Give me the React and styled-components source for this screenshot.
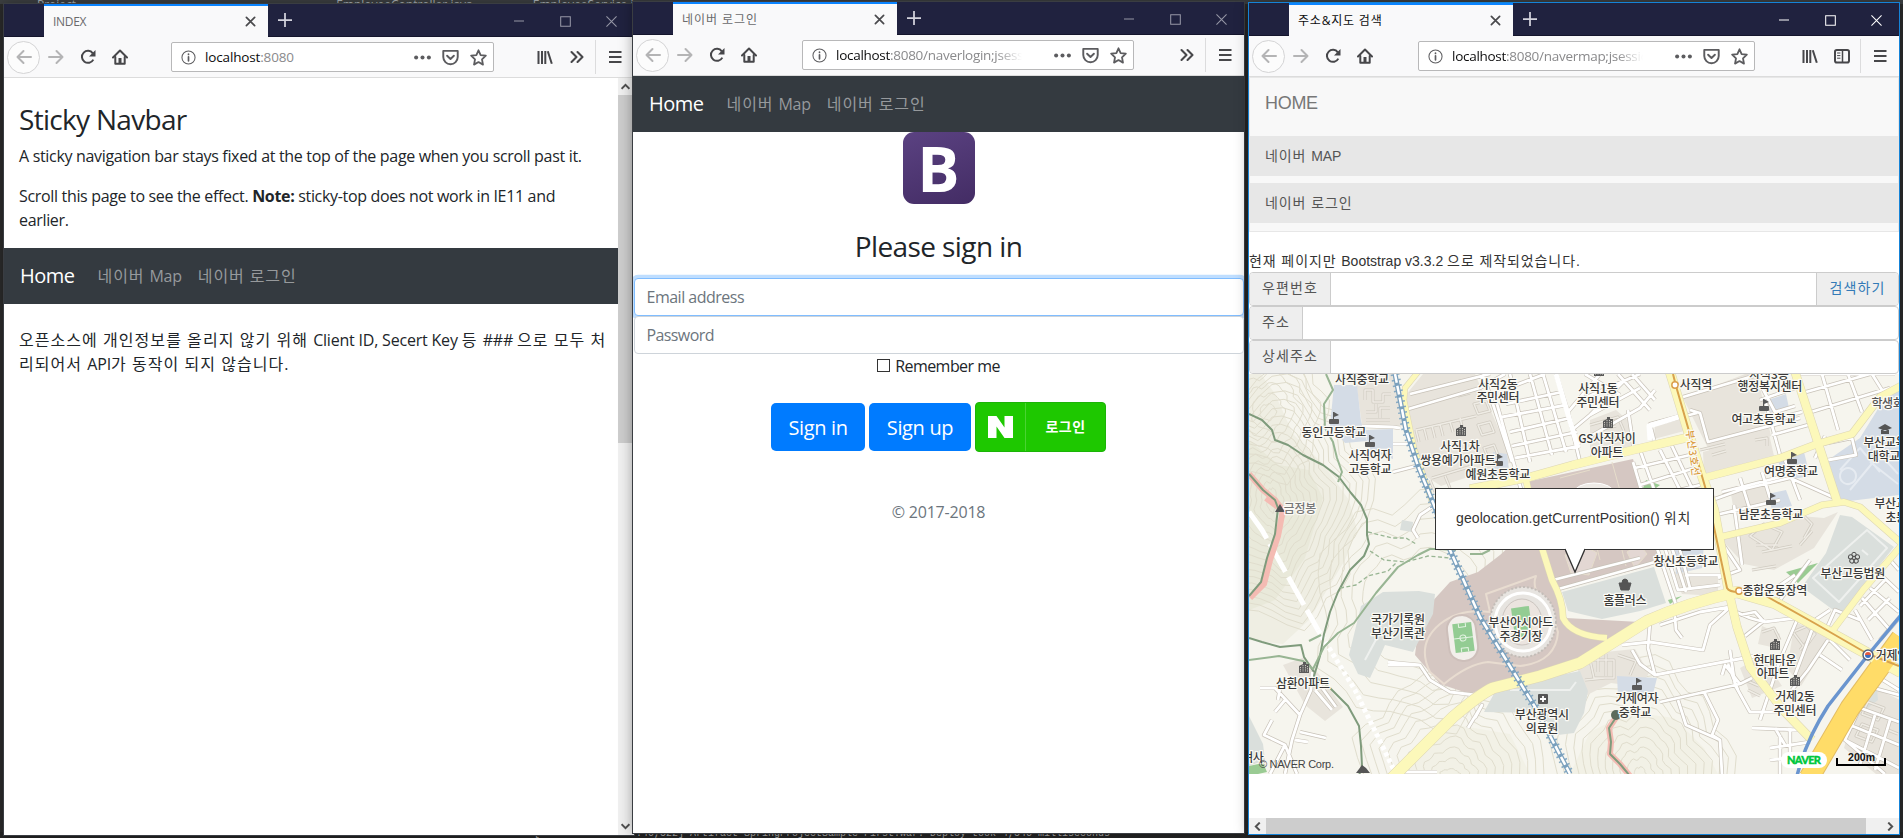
import React from 'react';
import styled, { createGlobalStyle, css } from 'styled-components';

const GlobalStyle = createGlobalStyle`
  *, *::before, *::after { box-sizing: border-box; }
  html, body { margin: 0; padding: 0; overflow: hidden; background: #2b2b2b; }
  p, h3, ul { margin: 0; padding: 0; }
`;

const ui = '"Open Sans", "Noto Sans CJK KR", sans-serif';
const helv = '"Liberation Sans", "Noto Sans CJK KR", sans-serif';
const kr = '"Noto Sans CJK KR", sans-serif';

/* Hangul runs are set wider than the Latin text around them */
const Ko = styled.span`
  letter-spacing: ${p => p.$ls || 1.05}px;
`;

/* ---------- desktop ---------- */
const Desktop = styled.div`
  position: relative;
  width: 1903px;
  height: 838px;
  overflow: hidden;
  background: #2b2b2b;
  display: flex;
  flex-direction: column;
  justify-content: space-between;
`;
const EditorStrip = styled.div`
  display: flex;
  gap: 260px;
  height: 4px;
  padding-left: 37px;
  overflow: hidden;
  white-space: nowrap;
  background: #3c3f41;
  color: #a9b0b5;
  font: 12px/12px ${ui};
  span { margin-top: -1px; }
  span + span { margin-right: -200px; }
`;
const ConsoleStrip = styled.div`
  height: 6px;
  padding-left: 534px;
  overflow: hidden;
  white-space: nowrap;
  background: #242424;
  color: #a8a8a8;
  font: 10px/12px "Liberation Mono", monospace;
  span { display: block; margin-top: -4px; }
`;

const Window = styled.section`
  position: absolute;
  left: ${p => p.$x}px;
  top: ${p => p.$y}px;
  width: ${p => p.$w}px;
  height: ${p => p.$h}px;
  display: flex;
  flex-direction: column;
  background: #fff;
  box-shadow: 0 0 0 1px ${p => (p.$active ? '#1583d7' : '#3a3d42')}, 0 0 13px rgba(0, 0, 0, 0.38);
`;
const TitleBar = styled.header`
  display: flex;
  flex: none;
  height: 33px;
  padding-left: 40px;
  background: #20223f;
  border-bottom: 1px solid #14152c;
`;
const Tab = styled.div`
  display: flex;
  align-items: center;
  justify-content: space-between;
  width: 224px;
  height: 33px;
  padding: 0 12px 0 9px;
  border-top: 2px solid #0a84ff;
  background: #f9f9fa;
  color: ${p => (p.$active ? '#0c0c0d' : '#6a6a6c')};
  font: 12px/20px ${ui};
  letter-spacing: ${p => p.$ls || 0}px;
`;
const NewTab = styled.div`
  display: flex;
  align-items: center;
  padding-left: 10px;
  flex: 1;
`;
const Control = styled.div`
  display: flex;
  align-items: center;
  justify-content: center;
  width: 46px;
  padding-top: 2px;
  color: ${p => (p.$active ? '#ffffff' : '#9697a6')};
`;
const Toolbar = styled.div`
  display: flex;
  flex: none;
  align-items: center;
  height: 41px;
  padding-left: 3px;
  background: #f9f9fa;
  border-bottom: 1px solid #dcdcdc;
  color: #4a4a4d;
`;
const Tool = styled.div`
  display: flex;
  align-items: center;
  justify-content: center;
  flex: none;
  width: 32px;
  height: 32px;
  color: ${p => (p.$dim ? '#b4b4b5' : '#47474a')};
  ${p => p.$round && css`
    width: 33px;
    height: 33px;
    border: 1px solid #d4d4d5;
    border-radius: 50%;
    background: #fcfcfc;
  `}
`;
const Address = styled.div`
  display: flex;
  align-items: center;
  flex: none;
  width: ${p => p.$w}px;
  height: 30px;
  margin-left: ${p => p.$gap}px;
  padding: 0 6px 0 9px;
  border: 1px solid #b8b8b9;
  border-radius: 2px;
  background: #fff;
  color: #5c5c5f;
`;
const Url = styled.div`
  flex: 1;
  height: 22px;
  margin: 2px 0 0 9px;
  overflow: hidden;
  white-space: nowrap;
  color: #8a8a8c;
  font: 13.5px/20px ${ui};
  letter-spacing: ${p => p.$ls}px;
  b { font-weight: 400; color: #0c0c0d; }
  ${p => p.$fade && css`
    mask-image: linear-gradient(to right, #000 calc(100% - 58px), transparent calc(100% - 32px));
  `}
`;
const UrlTools = styled.div`
  display: flex;
  align-items: center;
  gap: 11px;
`;
const RightTools = styled.div`
  display: flex;
  align-items: center;
  margin-left: auto;
  padding-right: ${p => p.$pr}px;
`;
const Divider = styled.div`
  width: 1px;
  height: 34px;
  margin: 0 3px 0 2px;
  background: #dcdcdd;
`;

const Svg = ({ s = 16, children, ...r }) => (
  <svg width={s} height={s} viewBox="0 0 16 16" fill="none" stroke="currentColor" strokeWidth="2" strokeLinecap="round" strokeLinejoin="round" {...r}>{children}</svg>
);
const BackIcon = () => <Svg><path d="M15 8H1.5M7.5 2L1.5 8l6 6" /></Svg>;
const ForwardIcon = () => <Svg><path d="M1 8h13.500M8.500 2l6 6-6 6" /></Svg>;
const ReloadIcon = () => (
  <Svg><path d="M13.3 10.600A6 6 0 1 1 12.800 4.300" strokeLinecap="butt" /><path d="M15.500 1v6.500H9z" fill="currentColor" stroke="none" /></Svg>
);
const HomeIcon = () => (
  <Svg><path d="M1 8.500L8 1.500l7 7" /><path d="M3.300 8v6.700h9.400V8" /><path d="M8 9v5" strokeWidth="3" strokeLinecap="butt" /></Svg>
);
const InfoIcon = () => (
  <Svg s={15} strokeWidth="1.100"><circle cx="8" cy="8" r="7" /><path d="M8 7.300v4.200M8 4.300v.4" strokeWidth="1.800" /></Svg>
);
const DotsIcon = () => (
  <Svg s={17} fill="currentColor" stroke="none"><circle cx="2" cy="8" r="1.900" /><circle cx="8" cy="8" r="1.900" /><circle cx="14" cy="8" r="1.900" /></Svg>
);
const PocketIcon = () => (
  <Svg s={17} strokeWidth="1.800"><path d="M1.200 1.800h13.600v5.700a6.800 6.800 0 0 1-13.600 0z" /><path d="M4.800 6.300L8 9.400l3.200-3.100" /></Svg>
);
const StarIcon = () => (
  <Svg s={17} strokeWidth="1.700"><path d="M8 1.200l2 4.500 4.900.6-3.600 3.400.9 5L8 12.300l-4.200 2.400.9-5L1.100 6.300 6 5.700z" /></Svg>
);
const LibraryIcon = () => (
  <Svg strokeLinecap="butt"><path d="M1.500 2v13M5 2v13M8.300 2v13M10.800 2.200l4 12.600" /></Svg>
);
const SidebarIcon = () => (
  <Svg><rect x="1" y="2" width="14" height="12.500" rx="1.800" /><path d="M8.500 2v12" strokeWidth="1.500" /><path d="M3.500 5h2.500M3.500 7.600h2.500M3.500 10.200h2.500" strokeWidth="1" /></Svg>
);
const MoreIcon = () => <Svg strokeWidth="2.100"><path d="M2.500 3l5 5-5 5M8.500 3l5 5-5 5" /></Svg>;
const MenuIcon = () => <Svg strokeLinecap="butt"><path d="M2 3h12.500M2 8h12.500M2 13h12.500" /></Svg>;
const CloseIcon = () => <Svg s={11} strokeWidth="2.500" color="#4a4a4d"><path d="M2 2l12 12M14 2L2 14" /></Svg>;
const PlusIcon = () => <Svg s={14} color="#d3d3dd" strokeLinecap="butt"><path d="M8 0v16M0 8h16" /></Svg>;

const Controls = ({ active }) => (
  <>
    <Control $active={active}><Svg s={10} strokeWidth="1.600" strokeLinecap="butt"><path d="M0 8h16" /></Svg></Control>
    <Control $active={active}><Svg s={11} strokeWidth="1.500"><path d="M1 1h14v14H1z" strokeLinejoin="miter" /></Svg></Control>
    <Control $active={active}><Svg s={11} strokeWidth="1.500"><path d="M1 1l14 14M15 1L1 15" /></Svg></Control>
  </>
);

const Browser = ({ x, y, w, h, active, title, tabLs, path, urlLs, gap, urlW, pr, extra, children }) => (
  <Window $x={x} $y={y} $w={w} $h={h} $active={active}>
    <TitleBar>
      <Tab $active={active} $ls={tabLs}>{title}<CloseIcon /></Tab>
      <NewTab><PlusIcon /></NewTab>
      <Controls active={active} />
    </TitleBar>
    <Toolbar>
      <Tool $round $dim><BackIcon /></Tool>
      <Tool $dim><ForwardIcon /></Tool>
      <Tool><ReloadIcon /></Tool>
      <Tool><HomeIcon /></Tool>
      <Address $w={urlW} $gap={gap}>
        <InfoIcon />
        <Url $ls={urlLs} $fade={path.length > 6}><b>localhost</b>{path}</Url>
        <UrlTools><DotsIcon /><PocketIcon /><StarIcon /></UrlTools>
      </Address>
      <RightTools $pr={pr}>
        {extra}
        <Divider />
        <Tool><MenuIcon /></Tool>
      </RightTools>
    </Toolbar>
    {children}
  </Window>
);

/* ---------- Bootstrap 4 pages ---------- */
const PageRow = styled.div`
  display: flex;
  flex: 1;
  min-height: 0;
`;
const Page = styled.main`
  flex: 1;
  min-width: 0;
  overflow: hidden;
  color: #212529;
  font: 16px/24px ${ui};
`;
const Container = styled.div`
  padding: 24px 15px 0;
`;
const Heading = styled.h3`
  margin-bottom: ${p => p.$mb || 8}px;
  font-size: 28px;
  font-weight: 400;
  line-height: 34px;
  letter-spacing: ${p => p.$ls}px;
`;
const Para = styled.p`
  margin-bottom: 16px;
  white-space: nowrap;
`;
const Line = styled.span`
  display: block;
  letter-spacing: ${p => p.$ls}px;
  b { font-weight: 700; }
`;
const Navbar = styled.nav`
  display: flex;
  align-items: center;
  height: 56px;
  padding: 0 16px;
  background: #343a40;
`;
const Brand = styled.a`
  margin-right: 23px;
  color: #fff;
  font-size: 20px;
  letter-spacing: -0.500px;
  line-height: 30px;
`;
const NavLink = styled.a`
  margin-right: 16px;
  color: #96999c;
  letter-spacing: -0.250px;
`;
const DarkNav = () => (
  <Navbar>
    <Brand>Home</Brand>
    <NavLink><Ko $ls={0.9}>네이버 </Ko>Map</NavLink>
    <NavLink><Ko $ls={0.9}>네이버 로그인</Ko></NavLink>
  </Navbar>
);

const VScroll = styled.div`
  display: flex;
  flex-direction: column;
  align-items: center;
  flex: none;
  width: 16px;
  padding-right: 1px;
  background: #f0f0f0;
  color: #505050;
`;
const VThumb = styled.div`
  width: 15px;
  height: 348px;
  margin-bottom: auto;
  background: #cdcdcd;
`;
const Arrow = styled.div`
  display: flex;
  align-items: center;
  justify-content: center;
  width: 17px;
  height: 17px;
  color: #505050;
`;
const Chevron = ({ d }) => <Svg s={9} strokeWidth="3.500" strokeLinecap="butt" strokeLinejoin="miter"><path d={d} /></Svg>;

const SignIn = styled.div`
  display: flex;
  flex-direction: column;
  align-items: center;
  text-align: center;
`;
const LogoWrap = styled.div`
  display: flex;
  align-items: center;
  justify-content: center;
  width: 72px;
  height: 72px;
  margin-bottom: 25px;
  border-radius: 11px;
  background: linear-gradient(160deg, #5b4282, #432c64);
  color: #fff;
  font: 700 63px/72px "Open Sans", sans-serif;
`;
const Field = styled.div`
  position: relative;
  z-index: ${p => (p.$focus ? 0 : 1)};
  width: 610px;
  height: 38px;
  padding: 6px 12px;
  border: 1px solid ${p => (p.$focus ? '#80bdff' : '#ced4da')};
  border-radius: 4px;
  background: #fff;
  box-shadow: ${p => (p.$focus ? '0 0 0 3.200px #bfdeff' : 'none')};
  color: #6c757d;
  text-align: left;
  letter-spacing: ${p => p.$ls}px;
`;
const Remember = styled.label`
  display: flex;
  align-items: center;
  gap: 5px;
  height: 24px;
  margin-bottom: 24px;
  letter-spacing: -0.550px;
`;
const Box = styled.i`
  width: 13px;
  height: 13px;
  margin-top: -2px;
  border: 1px solid #333;
  background: #fff;
`;
const Buttons = styled.div`
  display: flex;
  align-items: center;
  gap: 4px;
  height: 50px;
`;
const Button = styled.div`
  width: ${p => p.$w}px;
  height: 48px;
  border-radius: 5px;
  background: #007bff;
  color: #fff;
  font-size: 20px;
  line-height: 50px;
  letter-spacing: -0.350px;
`;
const NaverButton = styled.div`
  display: flex;
  width: 131px;
  height: 50px;
  border: 1px solid #1bb407;
  border-radius: 4px;
  background: #1ec800;
  color: #fff;
`;
const NaverMark = styled.div`
  width: 50px;
  border-right: 1px solid #4ad333;
  display: flex;
  align-items: center;
  justify-content: center;
`;
const NaverLabel = styled.div`
  flex: 1;
  font: 700 14px/47px ${kr};
  letter-spacing: 0.400px;
`;
const Copyright = styled.p`
  margin-top: 48px;
  color: #6c757d;
  letter-spacing: -0.200px;
`;

/* ---------- Bootstrap 3 page ---------- */
const MapPage = styled.main`
  display: flex;
  flex-direction: column;
  flex: 1;
  color: #333;
  font: 14px/20px ${helv};
`;
const LightNav = styled.nav`
  height: 155px;
  margin-bottom: 20px;
  border: 1px solid #e7e7e7;
  background: #f8f8f8;
`;
const LightBrand = styled.div`
  height: 50px;
  margin-bottom: 8px;
  padding: 15px;
  color: #777;
  font-size: 18px;
  letter-spacing: -0.300px;
`;
const LightItem = styled.div`
  height: 40px;
  margin-bottom: 7px;
  padding: 10px 15px;
  background: #e7e7e7;
  color: #555;
  letter-spacing: -0.100px;
`;
const Notice = styled.p`
  height: 20px;
  margin-top: -1px;
  margin-bottom: 1px;
  white-space: nowrap;
`;
const InputGroup = styled.div`
  display: flex;
  height: 34px;
  border: 1px solid #ccc;
  border-radius: 4px;
  overflow: hidden;
  background: #fff;
`;
const Addon = styled.div`
  width: ${p => p.$w}px;
  margin-left: ${p => (p.$right ? 'auto' : 0)};
  border: solid #ccc;
  border-width: ${p => (p.$right ? '0 0 0 1px' : '0 1px 0 0')};
  background: #eee;
  color: ${p => (p.$right ? '#337ab7' : '#555')};
  line-height: 30px;
  text-align: center;
  letter-spacing: 1.100px;
`;
const MapBox = styled.div`
  position: relative;
  height: 400px;
  margin-bottom: auto;
`;
const Callout = styled.div`
  position: absolute;
  left: 186px;
  top: 114px;
  width: 279px;
  height: 62px;
  padding: 19px 0 0 20px;
  border: 1px solid #333;
  background: #fff;
  white-space: nowrap;
  letter-spacing: 0.090px;
  svg { position: absolute; left: 129px; top: 59px; }
`;
const HScroll = styled.div`
  display: flex;
  align-items: center;
  height: 16px;
  background: #f0f0f0;
`;
const HThumb = styled.div`
  width: 600px;
  height: 16px;
  margin-right: auto;
  background: #cdcdcd;
`;

/* ---------- map drawing ---------- */
const MapLabel = styled.text`
  font: 500 ${p => p.$size || 12}px ${kr};
  fill: ${p => p.$fill || '#3a3a3a'};
  stroke: #fbfaf5;
  stroke-width: 2.500px;
  stroke-linejoin: round;
  paint-order: stroke;
`;

const ring = (cx, cy, rx, ry, seed) => {
  const pts = [];
  for (let i = 0; i < 40; i++) {
    const a = (i / 40) * Math.PI * 2;
    const k = 1 + 0.07 * Math.sin(a * 5 + seed) + 0.05 * Math.sin(a * 9 + 2) + 0.03 * Math.cos(a * 13 + seed * 1.5);
    pts.push(`${(cx + rx * k * Math.cos(a)).toFixed(1)},${(cy + ry * k * Math.sin(a)).toFixed(1)}`);
  }
  return `M${pts.join('L')}Z`;
};
const rings = (cx, cy, rx, ry, n, step, seed) =>
  Array.from({ length: n }, (_, i) => ring(cx, cy, rx + i * step, ry + i * step * 1.25, seed + i * 0.12)).join('');

const hillContours = rings(1272, 500, 5, 12, 16, 6, 0.5);
const southContours = rings(1450, 775, 10, 6, 11, 8, 2) + rings(1640, 775, 6, 8, 12, 7.5, 1);
const westContours = rings(1268, 412, 8, 8, 7, 8, 1.2) + rings(1420, 610, 60, 60, 5, 11, 1.2);

const labels = [
  ['사직중학교', 1362, 379], ['사직2동', 1498, 384], ['주민센터', 1498, 397], ['동인고등학교', 1334, 432],
  ['사직여자', 1370, 455], ['고등학교', 1370, 469], ['사직1차', 1460, 446], ['쌍용예가아파트', 1458, 460],
  ['예원초등학교', 1498, 474], ['금정봉', 1300, 508, '#777'], ['사직1동', 1598, 388], ['주민센터', 1598, 402],
  ['GS사직자이', 1607, 438], ['아파트', 1607, 452], ['사직역', 1696, 384], ['사직3동', 1769, 374],
  ['행정복지센터', 1770, 386], ['여고초등학교', 1764, 419], ['여명중학교', 1791, 471], ['학생회관', 1893, 403, '#555'],
  ['부산교육', 1885, 442], ['대학교', 1884, 456], ['부산교대', 1896, 503], ['초등학교', 1907, 517],
  ['남문초등학교', 1771, 514], ['창신초등학교', 1686, 561], ['부산고등법원', 1853, 573], ['종합운동장역', 1775, 590],
  ['홈플러스', 1625, 600], ['국가기록원', 1398, 619], ['부산기록관', 1398, 633], ['부산아시아드', 1521, 622],
  ['주경기장', 1521, 636], ['삼환아파트', 1303, 683], ['부산광역시', 1542, 714], ['의료원', 1542, 728],
  ['현대타운', 1775, 660], ['아파트', 1773, 673], ['거제2동', 1795, 696], ['주민센터', 1795, 710],
  ['거제여자', 1637, 698], ['중학교', 1635, 712], ['거제역', 1892, 655], ['여사', 1253, 757],
];
const labelWidth = t => [...t].reduce((n, c) => n + (/[A-Z0-9]/.test(c) ? 7.2 : 10.8), 0);

const minorRoads = `
M1393 427L1362 426M1400 428L1393 427M1405 410L1480 388L1505 374M1410 394L1490 374M1393 444H1410M1393 472L1420 465
M1497 404L1524 500M1483 374L1512 462M1510 374L1530 462M1530 374L1552 455M1543 374L1566 452M1503 390L1545 374M1506 404L1562 392M1502 417L1566 405M1510 432L1570 418M1512 446L1577 432M1515 458L1580 446
M1556 374L1568 412L1580 462M1568 412L1600 374M1572 430L1590 415L1625 380M1590 415L1640 388M1618 374L1650 410M1632 374L1655 400M1640 374L1580 400M1628 410L1634 450M1585 374L1620 395M1575 445L1640 408L1655 390
M1650 425L1697 413M1654 440L1650 424L1680 416M1683 397L1760 374M1690 410L1700 413L1708 442M1700 413L1708 442L1800 418M1765 400L1780 455M1755 374L1775 412L1795 406M1760 400L1795 388M1772 435L1808 425M1770 420L1802 412
M1800 374L1895 374M1806 392L1870 374M1811 412L1890 388M1822 374L1838 430M1848 374L1862 412M1872 374L1882 390M1825 436L1815 458M1818 445L1852 438L1856 455L1828 460
M1633 462L1650 520M1640 450L1665 520M1660 450L1690 510M1672 446L1700 505M1635 468L1690 455M1640 485L1695 468M1646 498L1700 485
M1707 484L1720 530M1712 500L1740 490L1790 478M1716 515L1780 500M1740 478L1750 510M1762 472L1770 498M1785 460L1800 500M1790 478L1835 498M1722 492L1800 472
M1657 548L1676 605M1665 548L1678 590L1720 585M1672 548L1686 592M1680 550L1690 588M1555 590L1655 562M1553 580L1640 558M1685 575L1722 575M1720 540L1740 570L1718 578M1734 505L1742 565
M1780 600L1810 560M1795 575L1770 592M1815 620L1830 610M1828 640L1808 670L1792 690M1797 620L1780 660L1760 720M1812 630L1795 675M1830 640L1850 660M1820 655L1842 670M1825 632L1835 610L1860 620
M1862 598L1890 630M1870 588L1899 612M1855 610L1872 640M1880 574L1899 592M1890 560L1899 570M1868 620L1890 598M1860 606L1885 580M1880 640L1899 618
M1674 605L1676 630L1682 638M1730 607L1710 625L1703 650L1650 642L1622 645M1650 622L1648 648L1655 675L1760 655M1730 607L1700 612L1660 625M1736 612L1750 618L1764 622L1796 618M1745 636L1765 620M1764 622L1755 612L1740 615
M1655 675L1640 664L1632 650M1660 702L1740 684L1752 678M1740 684L1725 665L1722 675M1730 650L1735 685L1750 712H1780M1678 700L1686 725L1720 740L1722 774M1704 692L1718 720L1712 735L1720 740M1728 664L1738 690M1752 728L1800 730M1775 728L1785 745M1770 748L1810 742M1770 760L1805 756M1780 735V774M1790 728V760
M1862 685L1899 695M1852 705L1899 722M1868 690L1845 740L1899 768M1845 740L1885 774M1875 715L1860 765M1890 720L1875 770M1850 725L1899 745M1870 672L1899 690
M1388 665H1420L1430 680L1450 692L1475 695M1420 665L1388 662M1475 718L1482 705L1468 728M1405 772H1437M1418 538L1413 530L1420 515L1435 505
M1312 672L1311 690L1300 715L1292 740L1285 774M1260 688H1275L1300 715M1278 700L1280 688M1272 720L1264 735L1285 745L1297 774M1300 732L1326 738M1295 740L1308 742M1315 690L1332 710M1320 685L1336 707M1285 745L1270 774M1285 700L1275 712`;

const blockDetail = `
M1365 400v-10h8v12h10v-8h8M1366 412h10v-8M1380 418v-10h10M1366 420h24
M1416 430l3 12M1424 428l3 12M1432 426l3 12M1440 424l3 12M1450 422l3 10M1460 418l3 12M1416 430l60-14M1430 480l5 12M1445 476l5 12M1432 478l40-12
M1474 404l12-3 4 10-12 3zM1478 425l12-3 4 10-12 3zM1484 448l10-3 4 10-10 3zM1458 396l12-3
M1590 425l28-8 6 14M1600 430l16-4M1700 450l25-6M1755 440l12-2v8M1712 455l14-4
M1750 536l14-12 18 8-10 18zM1788 520l14-6 10 10-8 14M1756 545h22M1762 552l30-6M1800 545l12-14M1752 570l24-4
M1762 632l12-4 6 12M1793 632l14-6 8 8-10 14zM1800 650l14-16
M1590 660h24v18h-20zM1598 652v20M1606 654v22M1618 655l18 6-6 14M1585 680l20-2M1745 680l14 6M1748 690l12 6
M1868 702l16 6-6 12-16-6zM1862 724l16 6-6 12-16-6zM1888 730l10 4M1855 745l12 6-5 10`;

const Flag = ({ x, y }) => (
  <g transform={`translate(${x} ${y})`} fill="#5a5a5a"><rect x="-5" y="1" width="10" height="5" rx="1" /><path d="M-1 2v-8h1l5 3-5 2v3z" /></g>
);
const Building = ({ x, y }) => (
  <g transform={`translate(${x} ${y})`}><path d="M-5 5v-7l4-2v-2h3v2h3v9z" fill="#5a5a5a" /><path d="M-3.500-1v5M-1-3v7M1.500-3v7M3.500-2v6" stroke="#e8e4dc" strokeWidth=".8" strokeDasharray="1.200 1" /></g>
);

const yellowRoads = [
  ['M1418 372L1405 388L1404 400L1414 448L1432 502', 5],
  ['M1470 489L1530 477L1573 465L1633 450L1690 437', 8],
  ['M1670 372L1700 470L1714 510L1730 597', 9],
  ['M1730 597L1737 627L1750 667L1783 710L1812 740', 8],
  ['M1703 478L1780 458L1817 444L1852 434L1880 397L1901 386', 7],
  ['M1795 372L1818 443L1838 504', 8],
  ['M1716 538L1780 523L1822 505L1844 502L1860 507L1901 543', 6],
  ['M1901 546L1863 590L1833 630', 6],
  ['M1526 480L1541 545L1552 580Q1563 600 1563 618Q1572 636 1607 638', 6],
];
const mainRoad = 'M1390 780L1453 717Q1480 694 1493 688L1540 676L1580 663L1647 621Q1690 602 1737 592L1775 603L1901 672';
const railway = 'M1395 374L1406 430L1418 466L1434 505L1450 550L1480 617L1535 707L1570 774';

const MapArt = () => (
  <svg width="650" height="400" viewBox="1249 374 650 400" fill="none" strokeLinejoin="round">
    <rect x="1249" y="374" width="650" height="400" fill="#f6f5ee" />
    <path d="M1249 374h12l14 20 18 40 30 30 26 36 8 30-12 30-36 60-26 24-34-4z" fill="#efeee3" />
    <path d="M1249 440l30 25 30 5 14 28-18 60-30 42-26 10z" fill="#e9e9da" />
    <path d="M1570 774l20-42 40-20 44 6 30 30 14 26zM1400 774l50-50 60 10 20 40z" fill="#f2f1e6" />
    <path d={hillContours + westContours + southContours} stroke="#e0ddcd" strokeWidth="1" />

    <g fill="#e8e4dc">
      <path d="M1355 374h38l10 52-41-1z" /><path d="M1405 396l18-22h52l38 88-72 24-22-14z" />
      <path d="M1683 398l62-24h12l14 62-60 18-8-16zM1703 452l66-18 5 22-70 18z" /><path d="M1590 420l26-10 16 14 4 24-46 10zM1655 424l30-8 3 14-34 9z" />
      <path d="M1722 540l78-24 24 2 14-6-24 36-40 22-30-6z" /><path d="M1575 655l60-6 14 24-8 14-30-4-28 14z" />
      <path d="M1795 622l36 16-30 48-14-18zM1740 668l22-12 20 30-30 12zM1762 626l18 8-4 14-18-4zM1862 682l38 18v74h-24l-32-26z" />
      <path d="M1283 665l22-8 16 20 22 30-18 14-20-16zM1672 572l46 2v22l-36-2zM1730 488l36-8 6 20-38 12z" />
    </g>
    <g fill="#d4dce6">
      <path d="M1334 385h23l4 36 6 20-22 2-15-17zM1364 430l29-1v30l-22-8z" /><path d="M1493 452l14 2 3 24-16 4zM1768 400l18-6 3 14-18 5zM1778 458l26-6 6 24-28 5z" />
      <path d="M1828 460l32-22 26-42 13-6v105l-58 7z" /><path d="M1617 676l40 2-5 20-34-2zM1674 548l30-4-2 24-26 6zM1768 494l18-4 6 16-20 4z" />
    </g>
    <path d="M1415 655L1420 615L1450 582L1478 572L1500 555L1530 528L1526 482L1633 459L1660 548L1650 566L1556 590L1566 618L1640 622L1600 652L1540 674L1497 683L1470 694L1440 684Z" fill="#d5c7c2" />
    <path d="M1430 672q-14-28 10-48q20-16 50-12l-4-18l50-18q-6 14 14 32l8 24q-2 30-38 34l-32-4q-20 2-44 22z" stroke="#e8dcd0" strokeWidth="2" />
    <path d="M1565 555l14-12 18 10-8 22-18-2zM1627 552l12-8 8 10-12 14zM1560 478l30-8M1600 560l-4-16M1612 462l14 50M1622 550l4 16" fill="#e3d7d3" stroke="#e6ddcb" />
    <ellipse cx="1594" cy="493" rx="20" ry="10" fill="#eeeae6" stroke="#fff" />
    <g fill="#dadfdc">
      <path d="M1361 606l22-14 36-1 16 3-2 20-20 38-28-7-8 18-7 15-12-4-9-19zM1562 592l92-25 12 36-26 8-38 8-34-8z" />
      <path d="M1484 712l12-22 40-10 44-9 8 20-4 22-10 20-16 2-18-22zM1826 553l14-38 12 2 42 30-54 68-38-28zM1249 716l14 28 2 16-16 6zM1402 520l11 2-1 10-12-2zM1860 690l16-12 2 22-10 8-20-6z" />
    </g>
    <path d="M1786 572l32-9-20 20zM1249 766l14-3 4 9-18 4zM1646 480l14 5-8 6h-10zM1668 600l14-4-12 8z" fill="#9acb93" />
    <path d="M1867 530l20 18-48 54-26-24zM1365 660l14-26 14-4M1862 550l6 5M1510 690h60l6-8" stroke="#eef0ee" strokeWidth="2" />
    <path d="M1840 470l20-22 20 24M1850 490l30-36 18 20M1840 476a8 8 0 1 1 0 .1M1870 462l28 22" stroke="#e6ebf1" strokeWidth="2" />

    <path d={blockDetail} stroke="#d0cbc1" strokeWidth="3" />
    <path d={blockDetail} stroke="#efece5" strokeWidth="1.500" />
    <path d={minorRoads} stroke="#c8c2b8" strokeWidth="4.200" />
    <path d={minorRoads} stroke="#fff" strokeWidth="2.800" />
    <path d="M1556 374l22 74M1650 440l-1-14 36-11" stroke="#fff" strokeWidth="5" />

    <path d="M1249 512L1262 530L1318 630" stroke="#fff" strokeWidth="5" strokeDasharray="32 6" />
    <path d="M1318 630L1355 690L1394 770" stroke="#fff" strokeWidth="5" strokeDasharray="4 3" />
    <path d="M1249 474l14 16 12 10 8 10-5 26-8 24-6 24-14 14M1266 498l12 9M1617 716l-8 12 2 14-1 12 10 10 10 12" stroke="#f4bbb3" strokeWidth="6" />
    <g stroke="#7f9b7c" strokeWidth="2">
      <path d="M1249 474l14 16 12 10 3 8-3 26-8 24-6 24-12 14M1617 716l-8 12 2 14-1 12 10 10 10 12" />
      <path d="M1249 414l13 6 10 10 3 10 13 5 15 10 20 10 16 12 12 16 10 12 6 14 0 16 2 9-5 12-14 14-12 22-8 20-6 22-4 22-6 20 16 12 18 18 11 20 2 20 1 20-5 16M1249 638l13 4 18 5 21-2 3 12 10 15" />
    </g>
    <path d="M1326 374l7 16-9 14 1 24 8 14 4 16 5 14-4 10M1249 660l30-4 24 5 10 8 11-22 14-14 16-10 22-30 22-26 20-12 12-6 8 0 18 1M1470 554h12l8-4M1309 641l12-6" stroke="#98b593" strokeWidth="2" />
    <path d="M1368 532l24 6 14 0 10 6M1370 551l14 9 22 2 22-6 22 2M1340 588l16-3 12-9 20-5 8-8" stroke="#98b593" strokeWidth="1.300" strokeDasharray="4 2.500" />

    {yellowRoads.map(([d, w]) => <path key={'c' + d} d={d} stroke="#ddd6b4" strokeWidth={w + 1} />)}
    <path d="M1901 638L1850 708L1809 778" stroke="#e3bd64" strokeWidth="21" />
    <path d={mainRoad} stroke="#ddd6b4" strokeWidth="12" />
    {yellowRoads.map(([d, w]) => <path key={d} d={d} stroke="#fcf8ba" strokeWidth={w} />)}
    <path d={mainRoad} stroke="#fcf8ba" strokeWidth="11" />
    <path d="M1901 638L1850 708L1809 778" stroke="#ffdc68" strokeWidth="19" />
    <path d="M1673 374l3 12 30 104 12 56 9 42q2 4 12 4M1766 596l50 28 52 30 31 12" stroke="#d8a24c" strokeWidth="2" />
    <path d="M1901 615L1868 655L1828 706Q1806 740 1797 776" stroke="#6a95cf" strokeWidth="3.500" />

    <ellipse cx="1523" cy="622" rx="33" ry="35" fill="#e7e4e0" stroke="#c3bdb8" strokeWidth="2" strokeDasharray="2 2" />
    <ellipse cx="1523" cy="622" rx="28" ry="29" stroke="#fff" strokeWidth="3" />
    <ellipse cx="1522" cy="622" rx="20" ry="23" fill="#ebe4df" stroke="#cbc4bf" />
    <rect x="-9" y="-15" width="18" height="30" fill="#93cc93" transform="translate(1522 622) rotate(-8)" />
    <rect x="-15" y="-23" width="29" height="46" rx="14" fill="#f2efeb" stroke="#cdbfba" strokeWidth="2" transform="translate(1463 638) rotate(-7)" />
    <g transform="translate(1463 638) rotate(-7)"><rect x="-9" y="-15" width="19" height="29" fill="#93cc93" /><path d="M-9 0h19M-3-15v4h7v-4M-3 14v-4h7v4" stroke="#e4f3e3" /><circle r="3" stroke="#e4f3e3" /></g>

    <path d={railway} stroke="#86a9c3" strokeWidth="9" strokeDasharray="1.500 4" />
    <path d={railway} stroke="#7aa0bd" strokeWidth="5" />
    <path d={railway} stroke="#fff" strokeWidth="2.500" strokeDasharray="9 3" />

    <g fill="#fff" stroke="#dba04c" strokeWidth="1.500"><circle cx="1675" cy="385" r="3.200" /><circle cx="1739" cy="591" r="3.200" /></g>
    <circle cx="1868" cy="655" r="5" fill="#fff" stroke="#53627e" strokeWidth="1.500" />
    <path d="M1865 655a3 3 0 0 1 6 0z" fill="#e25b40" /><path d="M1865 655a3 3 0 0 0 6 0z" fill="#3c6fc0" />
    {[[1334, 418], [1370, 441], [1498, 460], [1764, 405], [1792, 458], [1771, 499], [1637, 684], [1686, 545]].map(([x, y]) => <Flag key={x} x={x} y={y} />)}
    {[[1461, 431], [1608, 423], [1304, 668], [1775, 645], [1599, 371], [1795, 681]].map(([x, y]) => <Building key={x} x={x} y={y} />)}
    <path d="M1275 512l5-8 5 8zM1356 773l6-8 4 3 4 5z" fill="#555" />
    <circle cx="1616" cy="715" r="5" fill="#5c6b5b" />
    <path d="M1619 583h12l-2 7h-8zM1622 583a3 4 0 0 1 6 0" fill="#555" stroke="#555" />
    <path d="M1878 428l7-4 7 4-7 3zM1881 430v4h8v-4" fill="#555" />
    <g transform="translate(1854 558)" stroke="#555"><circle r="1.800" />{[0, 72, 144, 216, 288].map(a => <circle key={a} r="2.200" cx="0" cy="-3.500" transform={`rotate(${a})`} />)}</g>
    <rect x="1538" y="694" width="10" height="10" rx="1" fill="#555" /><path d="M1543 696v6M1540 699h6" stroke="#fff" strokeWidth="1.800" />

    {labels.map(([t, x, y, fill], i) => (
      <MapLabel key={i} x={x} y={y + 4.5} textAnchor="middle" textLength={labelWidth(t)} $fill={fill}>{t}</MapLabel>
    ))}
    <MapLabel transform="translate(1690 430) rotate(82)" x="0" y="4" textLength="46" $size={10} $fill="#d9993c">부산3호선</MapLabel>
    <text x="1259" y="768" textLength="75" fontFamily="Liberation Sans, sans-serif" fontSize="11" fill="#444">© NAVER Corp.</text>
    <rect x="1781" y="752" width="46" height="16" rx="8" fill="#fff" />
    <text x="1787" y="764" textLength="34" fontFamily="Lato, sans-serif" fontWeight="900" fontSize="11" fill="#00c73c" stroke="#00c73c" strokeWidth=".4">NAVER</text>
    <text x="1848" y="761" textLength="27" fontFamily="Liberation Sans, sans-serif" fontWeight="700" fontSize="10.5" fill="#111">200m</text>
    <path d="M1837 758v7h48v-7" stroke="#000" strokeWidth="2" strokeLinejoin="miter" />
  </svg>
);

export default function App() {
  return (
    <>
      <GlobalStyle />
      <Desktop>
        <EditorStrip><span>Project</span><span>EmployeeController.java</span><span>EmployeeService.java</span></EditorStrip>
        <ConsoleStrip><span>[2018-12-18 03:17:40,522] Artifact SpringProjectSample-First:war: Deploy took 4,546 milliseconds</span></ConsoleStrip>

        <Browser x={4} y={4} w={630} h={831} title="INDEX" tabLs={-0.3} path=":8080" urlLs={-0.15} gap={35} urlW={323} pr={3}
          extra={<><Tool><LibraryIcon /></Tool><Tool><MoreIcon /></Tool></>}>
          <PageRow>
            <Page>
              <Container>
                <Heading $ls={-0.7}>Sticky Navbar</Heading>
                <Para><Line $ls={-0.32}>A sticky navigation bar stays fixed at the top of the page when you scroll past it.</Line></Para>
                <Para>
                  <Line $ls={-0.33}>Scroll this page to see the effect. <b>Note:</b> sticky-top does not work in IE11 and</Line>
                  <Line $ls={-0.33}>earlier.</Line>
                </Para>
              </Container>
              <DarkNav />
              <Container>
                <Para>
                  <Line $ls={-0.2}>
                    <Ko>오픈소스에 개인정보를 올리지 않기 위해 </Ko>Client ID, Secert Key <Ko>등 </Ko>### <Ko>으로 모두 처</Ko>
                  </Line>
                  <Line $ls={-0.2}><Ko>리되어서 </Ko>API<Ko>가 동작이 되지 않습니다.</Ko></Line>
                </Para>
              </Container>
            </Page>
            <VScroll>
              <Arrow><Chevron d="M1 12l7-7 7 7" /></Arrow>
              <VThumb />
              <Arrow><Chevron d="M1 4l7 7 7-7" /></Arrow>
            </VScroll>
          </PageRow>
        </Browser>

        <Browser x={633} y={2} w={611} h={831} title="네이버 로그인" tabLs={0.95} path=":8080/naverlogin;jsessionid" urlLs={-0.28} gap={37} urlW={332} pr={3}
          extra={<Tool><MoreIcon /></Tool>}>
          <Page>
            <DarkNav />
            <SignIn>
              <LogoWrap>B</LogoWrap>
              <Heading $ls={-0.6} $mb={15}>Please sign in</Heading>
              <div>
                <Field $focus $ls={-0.5}>Email address</Field>
                <Field $ls={-0.6}>Password</Field>
              </div>
              <Remember><Box />Remember me</Remember>
              <Buttons>
                <Button $w={94}>Sign in</Button>
                <Button $w={102}>Sign up</Button>
                <NaverButton>
                  <NaverMark><svg width="25" height="22" viewBox="0 0 25 22"><path d="M0 0h8.500l8 11.500V0H25v22h-8.500l-8-11.500V22H0z" fill="#fff" /></svg></NaverMark>
                  <NaverLabel>로그인</NaverLabel>
                </NaverButton>
              </Buttons>
              <Copyright>© 2017-2018</Copyright>
            </SignIn>
          </Page>
        </Browser>

        <Browser x={1249} y={3} w={650} h={831} active title="주소&지도 검색" tabLs={0.8} path=":8080/navermap;jsessionid" urlLs={-0.28} gap={37} urlW={337} pr={3}
          extra={<><Tool><LibraryIcon /></Tool><Tool><SidebarIcon /></Tool></>}>
          <MapPage>
            <LightNav>
              <LightBrand>HOME</LightBrand>
              <LightItem><Ko $ls={0.9}>네이버 </Ko>MAP</LightItem>
              <LightItem><Ko $ls={0.9}>네이버 로그인</Ko></LightItem>
            </LightNav>
            <Notice><Ko $ls={0.9}>현재 페이지만 </Ko>Bootstrap v3.3.2 <Ko $ls={0.9}>으로 제작되었습니다.</Ko></Notice>
            <InputGroup><Addon $w={81}>우편번호</Addon><Addon $right $w={82}>검색하기</Addon></InputGroup>
            <InputGroup><Addon $w={53}>주소</Addon></InputGroup>
            <InputGroup><Addon $w={81}>상세주소</Addon></InputGroup>
            <MapBox>
              <MapArt />
              <Callout>
                geolocation.getCurrentPosition() <Ko>위치</Ko>
                <svg width="20" height="26"><path d="M0 0h20L10 24z" fill="#fff" /><path d="M0 1L10 24L20 1" fill="none" stroke="#333" strokeWidth="1.300" /></svg>
              </Callout>
            </MapBox>
            <HScroll>
              <Arrow><Chevron d="M12 1L5 8l7 7" /></Arrow>
              <HThumb />
              <Arrow><Chevron d="M4 1l7 7-7 7" /></Arrow>
            </HScroll>
          </MapPage>
        </Browser>
      </Desktop>
    </>
  );
}
